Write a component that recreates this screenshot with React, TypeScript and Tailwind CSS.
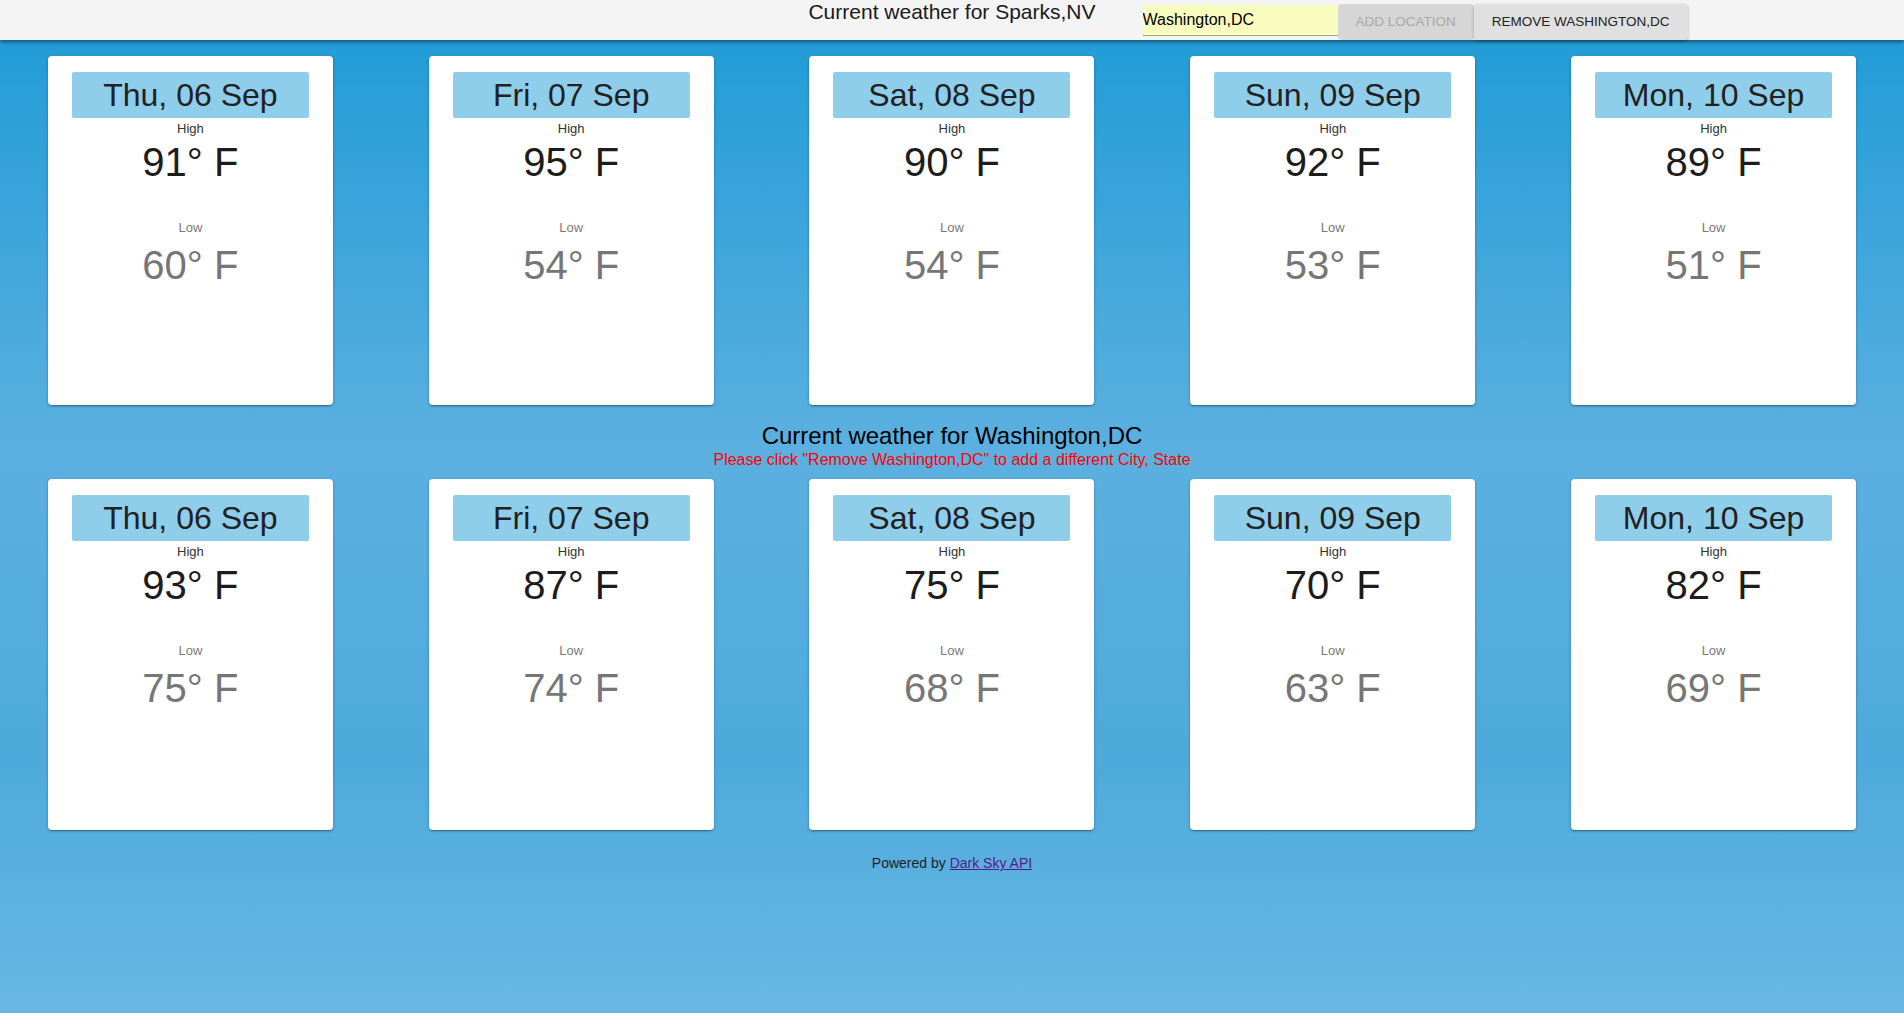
import React from "react";

type Day = { date: string; high: number; low: number };

const sparks: Day[] = [
  { date: "Thu, 06 Sep", high: 91, low: 60 },
  { date: "Fri, 07 Sep", high: 95, low: 54 },
  { date: "Sat, 08 Sep", high: 90, low: 54 },
  { date: "Sun, 09 Sep", high: 92, low: 53 },
  { date: "Mon, 10 Sep", high: 89, low: 51 },
];

const washington: Day[] = [
  { date: "Thu, 06 Sep", high: 93, low: 75 },
  { date: "Fri, 07 Sep", high: 87, low: 74 },
  { date: "Sat, 08 Sep", high: 75, low: 68 },
  { date: "Sun, 09 Sep", high: 70, low: 63 },
  { date: "Mon, 10 Sep", high: 82, low: 69 },
];

const DayCard = ({ day, tall }: { day: Day; tall?: boolean }) => {
  return (
    <div
      className={
        (tall ? "h-[351px] " : "h-[349px] ") +
        "w-[285px] bg-white rounded-[4px] px-6 pt-4 text-center shadow-[0_1px_3px_rgba(0,0,0,0.3),0_2px_1px_-1px_rgba(0,0,0,0.2)]"
      }
    >
      <div className="h-[46px] flex items-center justify-center bg-[#8fceeb] rounded-[2px] text-[32px] leading-[37px] text-[#212121]">
        {day.date}
      </div>
      <p className="mt-[3px] text-[13px] leading-[15px] text-[#333333]">High</p>
      <p className="mt-[3px] text-[40px] leading-[46px] text-[#1c1c1c]">{day.high}° F</p>
      <p className="mt-[35px] text-[13px] leading-[15px] text-[#7a7a7a]">Low</p>
      <p className="mt-[7px] text-[40px] leading-[46px] text-[#767676]">{day.low}° F</p>
    </div>
  );
};

const CardRow = ({ days, tall }: { days: Day[]; tall?: boolean }) => {
  return (
    <div className="grid grid-cols-5 justify-items-center">
      {days.map((d) => (
        <DayCard key={d.date} day={d} tall={tall} />
      ))}
    </div>
  );
};

export default function App() {
  return (
    <div
      className="min-h-[1013px] bg-[linear-gradient(to_bottom,#1d9ad6_0px,#5bb0e0_450px,#4eaadc_760px,#68b8e3_1013px)]"
      style={{ fontFamily: '"Liberation Sans", Arial, sans-serif' }}
    >
      <header className="relative z-10 h-10 bg-[#f4f4f4] grid grid-cols-[1fr_auto_1fr] shadow-[0_2px_4px_rgba(0,0,0,0.45)]">
        <div />
        <h1 className="text-[21px] leading-[24px] text-[#1a1a1a]">Current weather for Sparks,NV</h1>
        <div className="flex items-start pl-[47px]">
          <input
            defaultValue="Washington,DC"
            className="mt-[5px] h-[31px] w-[195px] bg-[#f9fcbf] border-b border-[#a3a38a] text-[16px] text-black outline-none"
          />
          <button
            disabled
            className="mt-[4px] h-9 px-[18px] rounded-[4px] bg-[#d6d6d6] text-[13.5px] text-[#a8a8a8] uppercase"
          >
            Add Location
          </button>
          <button className="mt-[4px] h-9 px-[18px] rounded-[4px] bg-[#e0e0e0] text-[13.5px] text-[#222222] uppercase shadow-[0_1px_3px_rgba(0,0,0,0.3)]">
            Remove Washington,DC
          </button>
        </div>
      </header>

      <main className="pt-4">
        <CardRow days={sparks} />

        <div className="mt-[17px] mb-[10px] text-center">
          <h2 className="text-[24px] leading-[28px] text-black">Current weather for Washington,DC</h2>
          <p className="mt-[1px] text-[16px] leading-[18px] text-[#ff0000]">
            Please click "Remove Washington,DC" to add a different City, State
          </p>
        </div>

        <CardRow days={washington} tall />

        <p className="mt-[25px] text-center text-[14px] leading-[16px] text-[#222222]">
          Powered by{" "}
          <a href="#" className="text-[#551a8b] underline">
            Dark Sky API
          </a>
        </p>
      </main>
    </div>
  );
}
